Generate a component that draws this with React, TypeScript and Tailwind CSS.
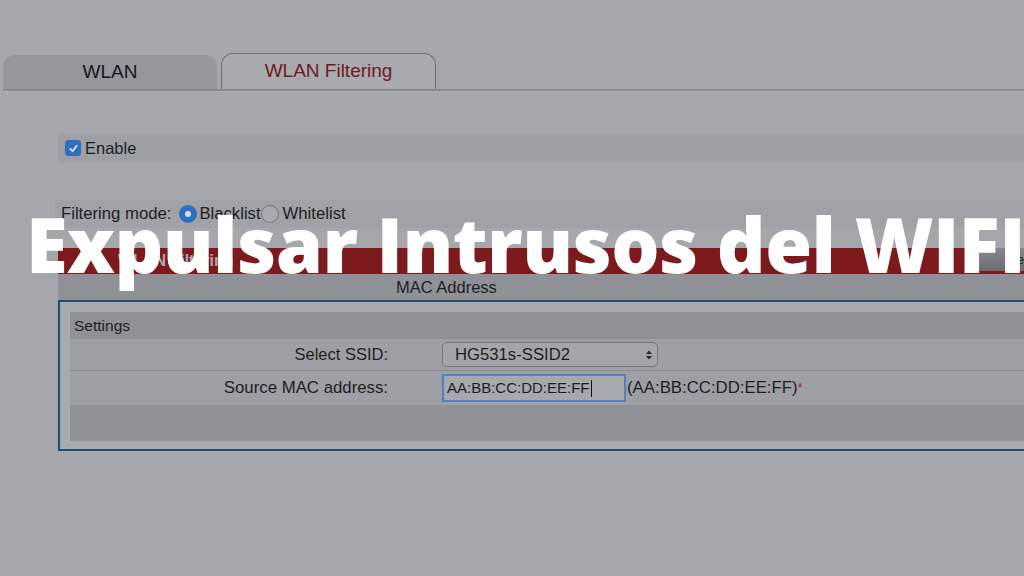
import React from "react";

export default function App() {
  const sans = { fontFamily: '"Liberation Sans", Arial, sans-serif' };
  return (
    <div className="relative h-[576px] w-[1024px] overflow-hidden bg-[#a6a6ad] text-[#1e1e22]" style={sans}>
      <div className="pt-[53px]">
        {/* tabs */}
        <div className="flex gap-[4px] pl-[3px] h-[36px] items-end">
          <div className="w-[214px] h-[34px] rounded-t-[12px] bg-[#96969c] flex items-center justify-center text-[19px] text-[#16161a]">
            WLAN
          </div>
          <div className="w-[215px] h-[36px] rounded-t-[12px] border border-b-0 border-[#6e6e74] bg-[#a9a9b0] flex items-center justify-center text-[19px] text-[#6e1a1e]">
            WLAN Filtering
          </div>
        </div>
        <div className="ml-[3px] h-[3px] bg-[#88888e] border-b border-[#b0b0b6]" />

        <div className="pl-[58px]">
          {/* enable */}
          <div className="mt-[42px] h-[28px] bg-[#9f9fa6] flex items-center pl-[7px] gap-[4px] text-[16.5px]">
            <span className="w-[16px] h-[16px] rounded-[3px] bg-[#2f6fc0] flex items-center justify-center">
              <svg width="11" height="11" viewBox="0 0 12 12">
                <path d="M2.5 6.5 L5 9 L9.5 3" fill="none" stroke="#e8eef8" strokeWidth="1.8" strokeLinecap="round" strokeLinejoin="round" />
              </svg>
            </span>
            <span>Enable</span>
          </div>

          {/* filtering mode */}
          <div className="mt-[38px] -ml-[3px] h-[28px] bg-[#a1a1a8] flex items-center pl-[6px] text-[16.7px]">
            <span>Filtering mode:</span>
            <span className="ml-[8px] w-[18px] h-[18px] rounded-full bg-[#2f6fc0] flex items-center justify-center">
              <span className="w-[6px] h-[6px] rounded-full bg-[#d8dce4]" />
            </span>
            <span className="ml-[2px]">Blacklist</span>
            <span className="w-[18px] h-[18px] rounded-full border border-[#77777d] bg-[#a9a9b0]" />
            <span className="ml-[4px]">Whitelist</span>
          </div>

          {/* red title bar */}
          <div className="mt-[20px] h-[26px] flex">
            <div className="flex-1 bg-[#7c1a1d] flex items-center pl-[60px] text-[16px] font-bold text-[#b0a4b2]">
              WLAN Filtering
            </div>
            <div className="w-[52px] bg-gradient-to-b from-[#86868c] to-[#6c6c72] border-b-[3px] border-[#7c1a1d] flex items-center justify-end text-[13px] text-[#222]">
              e
            </div>
          </div>

          {/* MAC address header */}
          <div className="h-[26px] bg-[#909097] flex items-center pl-[338px] text-[16.5px]">
            MAC Address
          </div>

          {/* box */}
          <div className="border-2 border-r-0 border-[#1f4d6d] bg-[#a9a9b0] pt-[10px] pl-[10px] pb-[8px]">
            <div className="h-[27px] bg-[#909097] flex items-center pl-[4px] text-[15.5px]">Settings</div>
            <div className="h-[32px] bg-[#9e9ea5] flex items-center text-[16.5px] border-b border-[#8c8c92]">
              <div className="w-[318px] text-right">Select SSID:</div>
              <div className="ml-[54px] w-[216px] h-[25px] rounded-[5px] border border-[#76767c] bg-[#a4a4ab] flex items-center pl-[12px] pr-[4px] text-[16.7px]">
                <span className="flex-1">HG531s-SSID2</span>
                <svg width="8" height="12" viewBox="0 0 8 12">
                  <path d="M1 5 L4 1.5 L7 5 Z" fill="#2a2a2e" />
                  <path d="M1 7 L4 10.5 L7 7 Z" fill="#2a2a2e" />
                </svg>
              </div>
            </div>
            <div className="h-[34px] bg-[#9e9ea5] flex items-center text-[16.8px]">
              <div className="w-[318px] text-right">Source MAC address:</div>
              <div className="ml-[54px] w-[184px] h-[28px] border-2 border-[#4f82c0] bg-[#a7a7ae] flex items-center pl-[3px] text-[15px]">
                AA:BB:CC:DD:EE:FF<span className="ml-[1px] w-[1px] h-[17px] bg-[#111]" />
              </div>
              <span className="ml-[1px]">(AA:BB:CC:DD:EE:FF)</span>
              <span className="text-[#a02030] text-[12px] self-start mt-[8px]">*</span>
            </div>
            <div className="h-[36px] bg-[#909097]" />
          </div>
        </div>
      </div>

      {/* overlay title */}
      <div
        className="absolute left-[26px] top-[206px] text-white whitespace-nowrap text-[76px] leading-none tracking-[-0.6px]"
        style={{ fontFamily: '"Open Sans", Lato, sans-serif', fontWeight: 800 }}
      >
        Expulsar Intrusos del WIFI
      </div>
    </div>
  );
}
